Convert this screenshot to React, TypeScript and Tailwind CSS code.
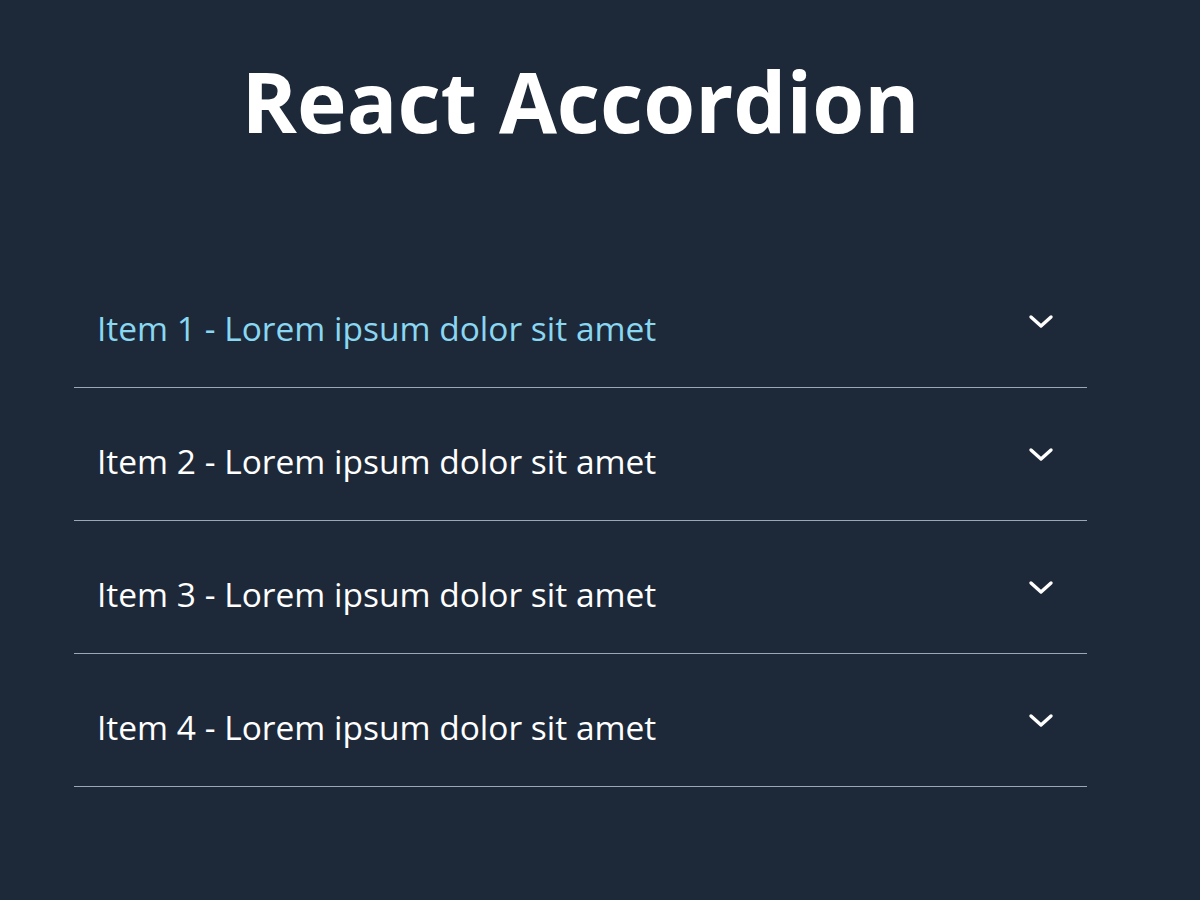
import React, { useState } from 'react'

const items = [
  'Item 1 - Lorem ipsum dolor sit amet',
  'Item 2 - Lorem ipsum dolor sit amet',
  'Item 3 - Lorem ipsum dolor sit amet',
  'Item 4 - Lorem ipsum dolor sit amet',
]

const Chevron: React.FC = () => (
  <svg width="26" height="16" viewBox="0 0 26 16" fill="none" className="block">
    <path d="M3 3 L13 12 L23 3" stroke="white" strokeWidth="3.4" strokeLinecap="round" strokeLinejoin="round" />
  </svg>
)

const App: React.FC = () => {
  const [active] = useState(0)

  return (
    <div className="min-h-screen w-full bg-[#1d2939] font-['Open_Sans',sans-serif]">
      <div className="ml-[74px] w-[1013px] pt-[59px]">
        <h1 className="text-center text-[84px] font-bold leading-none text-white">React Accordion</h1>
        <ul className="mt-[112px]">
          {items.map((label, i) => (
            <li key={label} className="border-b border-[#9aa7b8]">
              <button className="flex h-[132px] w-full items-center justify-between pl-[23px] pr-[33px] pt-[14px] text-left">
                <span className={`text-[33.5px] leading-normal ${i === active ? 'text-[#8ad7f2]' : 'text-white'}`}>{label}</span>
                <span className="-mt-[12px]">
                  <Chevron />
                </span>
              </button>
            </li>
          ))}
        </ul>
      </div>
    </div>
  )
}

export default App
